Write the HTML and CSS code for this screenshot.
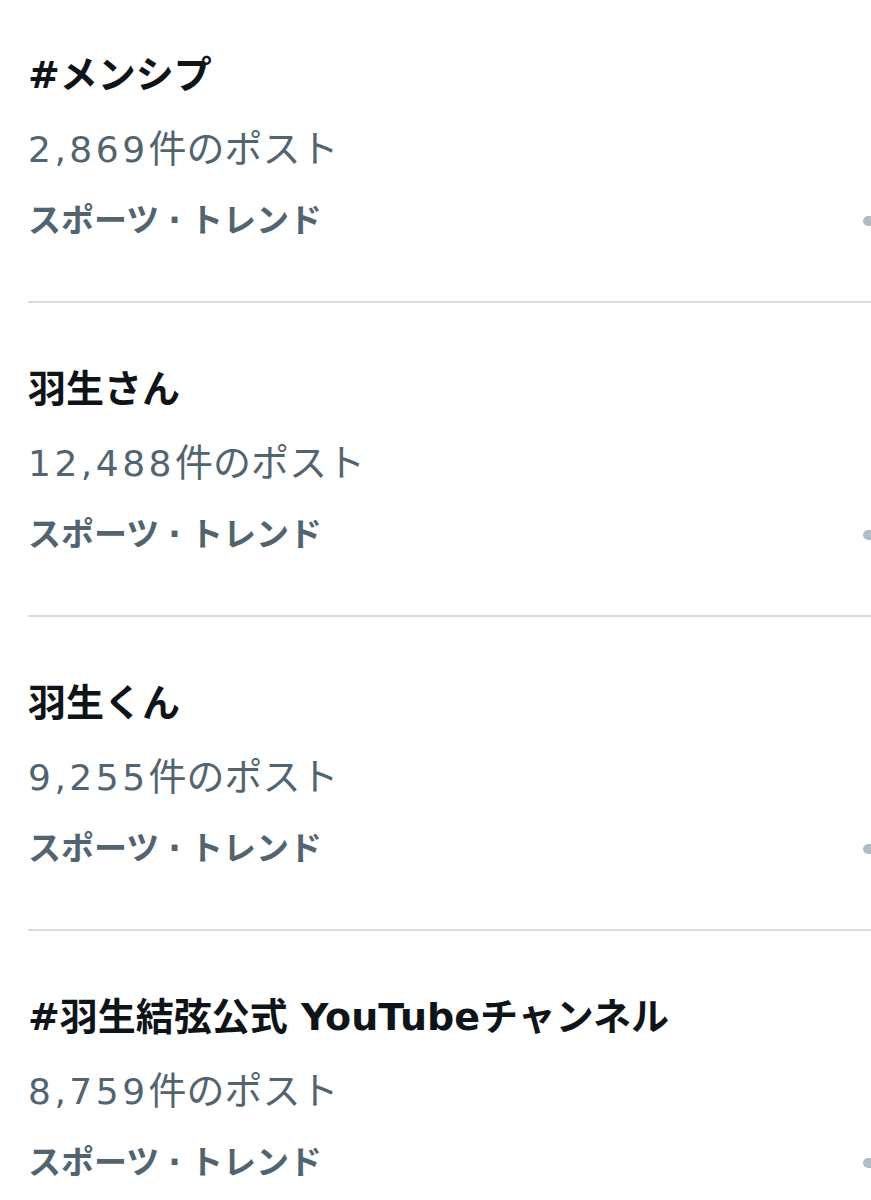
FILE: index.html
```html
<!DOCTYPE html>
<html lang="ja">
<head>
<meta charset="utf-8">
<title>トレンド</title>
<link rel="stylesheet" href="styles.css">
</head>
<body>
<main class="trends">
  <section class="trend">
    <div class="trend-title">#メンシプ</div>
    <div class="trend-count"><span class="num">2,869</span>件のポスト</div>
    <div class="trend-meta"><span>スポーツ<span class="sep">·</span>トレンド</span><span class="more"></span></div>
  </section>
  <section class="trend">
    <div class="trend-title">羽生さん</div>
    <div class="trend-count"><span class="num">12,488</span>件のポスト</div>
    <div class="trend-meta"><span>スポーツ<span class="sep">·</span>トレンド</span><span class="more"></span></div>
  </section>
  <section class="trend">
    <div class="trend-title">羽生くん</div>
    <div class="trend-count"><span class="num">9,255</span>件のポスト</div>
    <div class="trend-meta"><span>スポーツ<span class="sep">·</span>トレンド</span><span class="more"></span></div>
  </section>
  <section class="trend">
    <div class="trend-title">#羽生結弦公式 YouTubeチャンネル</div>
    <div class="trend-count"><span class="num">8,759</span>件のポスト</div>
    <div class="trend-meta"><span>スポーツ<span class="sep">·</span>トレンド</span><span class="more"></span></div>
  </section>
</main>
</body>
</html>
```

FILE: styles.css
```css
html, body {
  margin: 0;
  padding: 0;
  background: #ffffff;
  overflow: hidden;
}

body {
  font-family: "DejaVu Sans", "Noto Sans CJK JP", sans-serif;
}

.trends {
  display: flex;
  flex-direction: column;
}

.trend {
  margin-left: 28px;
  padding: 58px 0 56px 0;
  border-bottom: 2px solid #d9dcdf;
  display: flex;
  flex-direction: column;
}

.trend:first-child {
  padding-top: 47px;
}

.trend-title {
  height: 56px;
  font-size: 38px;
  font-weight: 700;
  line-height: 56px;
  color: #0f1419;
  white-space: nowrap;
}

.trend-count {
  height: 52px;
  margin-top: 20px;
  font-size: 38px;
  font-weight: 400;
  line-height: 52px;
  color: #536471;
  white-space: nowrap;
}

.num {
  font-size: 36px;
  letter-spacing: 3.5px;
}

.trend-meta {
  height: 48px;
  margin-top: 22px;
  font-size: 33px;
  font-weight: 700;
  line-height: 48px;
  color: #536471;
  display: flex;
  justify-content: space-between;
  align-items: center;
  white-space: nowrap;
}

.sep {
  display: inline-block;
  margin: 0 9px;
}

.more {
  width: 8px;
  height: 10px;
  border-radius: 5px 0 0 5px;
  background: #b3bcc4;
}
```
